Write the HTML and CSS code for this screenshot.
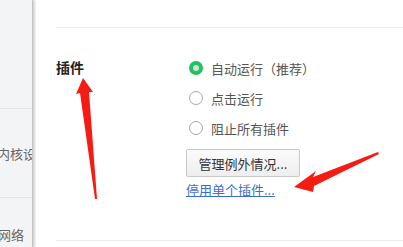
FILE: index.html
```html
<!DOCTYPE html>
<html lang="zh">
<head>
<meta charset="utf-8">
<link rel="stylesheet" href="styles.css">
</head>
<body>
<div class="page">
  <aside class="sidebar">
    <div class="side-item side-a"></div>
    <div class="side-item side-b"><span class="side-text shift">内核设置</span></div>
    <div class="side-item side-c"><span class="side-text shift2">网络</span></div>
  </aside>
  <main class="main">
    <div class="divider"></div>
    <section class="section">
      <div class="label">插件</div>
      <div class="options">
        <div class="radio-row"><span class="radio checked"></span><span class="radio-text">自动运行（推荐）</span></div>
        <div class="radio-row"><span class="radio"></span><span class="radio-text">点击运行</span></div>
        <div class="radio-row"><span class="radio"></span><span class="radio-text">阻止所有插件</span></div>
        <button class="btn">管理例外情况...</button>
        <a class="link" href="#">停用单个插件...</a>
      </div>
    </section>
    <div class="divider bottom"></div>
  </main>
</div>
<svg class="arrows" width="403" height="247" viewBox="0 0 403 247">
  <polygon fill="#f51c14" points="83,78 93,92 89,92 97,199 95,199 80,93 76,94"/>
  <polygon fill="#f51c14" points="294,187 316,171 313,177 378,152 379,154 314,186 313,192"/>
</svg>
</body>
</html>
```
FILE: styles.css
```css
html, body {
  margin: 0;
  padding: 0;
  background: #ffffff;
}
body {
  font-family: "Noto Sans CJK SC", "Noto Sans", sans-serif;
  width: 403px;
  height: 247px;
  overflow: hidden;
  position: relative;
}
.page {
  display: flex;
  height: 247px;
}
.sidebar {
  width: 32px;
  flex: none;
  background: #f3f4f6;
  border-right: 1px solid #c4c4c6;
  box-shadow: 2px 0 2px #d4d4d6;
  display: flex;
  flex-direction: column;
  overflow: hidden;
}
.side-item {
  flex: none;
  border-bottom: 1px solid #e3e4e7;
  display: flex;
  align-items: center;
  white-space: nowrap;
}
.side-a { height: 108px; }
.side-b { height: 88px; }
.side-c { height: 60px; border-bottom: none; align-items: flex-start; padding-top: 27px; }
.side-text {
  font-size: 13px;
  color: #666666;
}
.shift { margin-left: -3px; }
.shift2 { margin-left: -2px; }
.main {
  flex: 1;
  padding-left: 23px;
  padding-top: 27px;
  display: flex;
  flex-direction: column;
}
.divider {
  height: 1px;
  background: #ececec;
}
.section {
  display: flex;
  height: 212px;
}
.label {
  width: 130px;
  flex: none;
  font-size: 14px;
  font-weight: bold;
  color: #222222;
  padding-top: 29px;
  line-height: 20px;
}
.options {
  display: flex;
  flex-direction: column;
  align-items: flex-start;
  padding-top: 30px;
}
.radio-row {
  display: flex;
  align-items: center;
  height: 20px;
  margin-bottom: 10px;
  margin-left: 3px;
}
.radio {
  border: 1px solid #a9a9a9;
  border-radius: 50%;
  box-sizing: border-box;
  width: 14px;
  height: 14px;
  margin-right: 8px;
  background: #fff;
}
.radio.checked {
  border: 4px solid #1fc35f;
  background: #dcdcdc;
}
.radio-text {
  font-size: 13px;
  color: #555555;
}
.btn {
  margin-top: 1px;
  width: 114px;
  height: 28px;
  border: 1px solid #c9c9c9;
  border-radius: 2px;
  background: linear-gradient(#fbfbfb, #eeeeee);
  font-family: inherit;
  font-size: 13px;
  color: #333333;
  padding: 0;
}
.link {
  margin-top: 3px;
  font-size: 13px;
  color: #3b6fcf;
  text-decoration: underline;
}
.arrows {
  position: absolute;
  left: 0;
  top: 0;
  pointer-events: none;
}
```
